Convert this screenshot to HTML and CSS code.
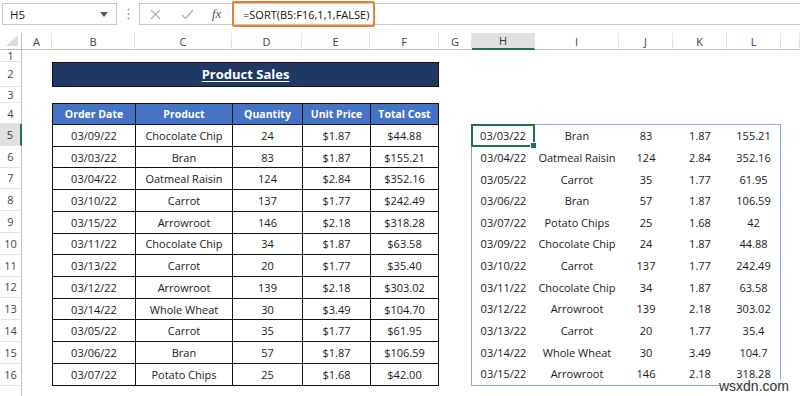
FILE: index.html
```html
<!DOCTYPE html>
<html>
<head>
	<title>SORT</title>
	<link rel="stylesheet" href="styles.css">
</head>
<body>

	<div class="formula-bar">
		<div class="name-box">
			<span>H5</span>
			<svg class="caret" width="8" height="5" viewBox="0 0 8 5"><path d="M0 0 H8 L4 5 Z" fill="#606060"/></svg>
		</div>
		<div class="grip">
			<svg width="3" height="12" viewBox="0 0 3 12"><circle cx="1.5" cy="1.5" r="1" fill="#9a9a9a"/><circle cx="1.5" cy="6" r="1" fill="#9a9a9a"/><circle cx="1.5" cy="10.5" r="1" fill="#9a9a9a"/></svg>
		</div>
		<div class="fx-area">
			<div class="fx-buttons">
				<svg width="11" height="11" viewBox="0 0 11 11"><path d="M1 1 L10 10 M10 1 L1 10" stroke="#b4b4b4" stroke-width="1.3"/></svg>
				<svg width="13" height="11" viewBox="0 0 13 11"><path d="M1 6 L4.5 9.5 L12 1" stroke="#b4b4b4" stroke-width="1.4" fill="none"/></svg>
				<span class="fx">fx</span>
			</div>
			<div class="formula">=SORT(B5:F16,1,1,FALSE)</div>
		</div>
	</div>

	<div class="sheet">
		<!-- column headers -->
		<div class="colhead corner">
			<svg width="12" height="11" viewBox="0 0 12 11"><path d="M12 0 V11 H0 Z" fill="#dcdcdc"/></svg>
		</div>
		<div class="colhead">A</div>
		<div class="colhead">B</div>
		<div class="colhead">C</div>
		<div class="colhead">D</div>
		<div class="colhead">E</div>
		<div class="colhead">F</div>
		<div class="colhead">G</div>
		<div class="colhead selected">H</div>
		<div class="colhead">I</div>
		<div class="colhead">J</div>
		<div class="colhead">K</div>
		<div class="colhead">L</div>
		<div class="colhead"></div>

		<!-- row headers -->
		<div class="rowhead first">1</div>
		<div class="rowhead">2</div>
		<div class="rowhead">3</div>
		<div class="rowhead">4</div>
		<div class="rowhead selected">5</div>
		<div class="rowhead">6</div>
		<div class="rowhead">7</div>
		<div class="rowhead">8</div>
		<div class="rowhead">9</div>
		<div class="rowhead">10</div>
		<div class="rowhead">11</div>
		<div class="rowhead">12</div>
		<div class="rowhead">13</div>
		<div class="rowhead">14</div>
		<div class="rowhead">15</div>
		<div class="rowhead">16</div>
		<div class="rowhead last"></div>

		<div class="banner"><span>Product Sales</span></div>

		<div class="sales">
			<div class="th">Order Date</div><div class="th">Product</div><div class="th">Quantity</div><div class="th">Unit Price</div><div class="th">Total Cost</div>
			<div>03/09/22</div><div>Chocolate Chip</div><div>24</div><div>$1.87</div><div>$44.88</div>
			<div>03/03/22</div><div>Bran</div><div>83</div><div>$1.87</div><div>$155.21</div>
			<div>03/04/22</div><div>Oatmeal Raisin</div><div>124</div><div>$2.84</div><div>$352.16</div>
			<div>03/10/22</div><div>Carrot</div><div>137</div><div>$1.77</div><div>$242.49</div>
			<div>03/15/22</div><div>Arrowroot</div><div>146</div><div>$2.18</div><div>$318.28</div>
			<div>03/11/22</div><div>Chocolate Chip</div><div>34</div><div>$1.87</div><div>$63.58</div>
			<div>03/13/22</div><div>Carrot</div><div>20</div><div>$1.77</div><div>$35.40</div>
			<div>03/12/22</div><div>Arrowroot</div><div>139</div><div>$2.18</div><div>$303.02</div>
			<div>03/14/22</div><div>Whole Wheat</div><div>30</div><div>$3.49</div><div>$104.70</div>
			<div>03/05/22</div><div>Carrot</div><div>35</div><div>$1.77</div><div>$61.95</div>
			<div>03/06/22</div><div>Bran</div><div>57</div><div>$1.87</div><div>$106.59</div>
			<div>03/07/22</div><div>Potato Chips</div><div>25</div><div>$1.68</div><div>$42.00</div>
		</div>

		<div class="sorted">
			<div class="active">03/03/22</div><div>Bran</div><div>83</div><div>1.87</div><div>155.21</div>
			<div>03/04/22</div><div>Oatmeal Raisin</div><div>124</div><div>2.84</div><div>352.16</div>
			<div>03/05/22</div><div>Carrot</div><div>35</div><div>1.77</div><div>61.95</div>
			<div>03/06/22</div><div>Bran</div><div>57</div><div>1.87</div><div>106.59</div>
			<div>03/07/22</div><div>Potato Chips</div><div>25</div><div>1.68</div><div>42</div>
			<div>03/09/22</div><div>Chocolate Chip</div><div>24</div><div>1.87</div><div>44.88</div>
			<div>03/10/22</div><div>Carrot</div><div>137</div><div>1.77</div><div>242.49</div>
			<div>03/11/22</div><div>Chocolate Chip</div><div>34</div><div>1.87</div><div>63.58</div>
			<div>03/12/22</div><div>Arrowroot</div><div>139</div><div>2.18</div><div>303.02</div>
			<div>03/13/22</div><div>Carrot</div><div>20</div><div>1.77</div><div>35.4</div>
			<div>03/14/22</div><div>Whole Wheat</div><div>30</div><div>3.49</div><div>104.7</div>
			<div>03/15/22</div><div>Arrowroot</div><div>146</div><div>2.18</div><div>318.28</div>
		</div>
	</div>

	<div class="watermark">wsxdn.com</div>

</body>
</html>
```

FILE: styles.css
```css
	*{
		box-sizing: border-box;
	}

	body{
		margin: 0;
		height: 396px;
		overflow: hidden;
		position: relative;
		background: #fff;
		font-family: "Open Sans", sans-serif;
		font-size: 11px;
		color: #1a1a1a;
	}

	/* formula bar */
	.formula-bar{
		display: flex;
		height: 22px;
		margin-top: 3px;
	}

	.name-box{
		width: 115px;
		margin-left: 2px;
		border: 1px solid #c6c6c6;
		display: flex;
		align-items: center;
		justify-content: space-between;
		padding: 0 8px 0 7px;
		color: #222;
		font-size: 11.5px;
	}

	.grip{
		width: 22px;
		display: flex;
		align-items: center;
		justify-content: center;
	}

	.fx-area{
		flex: 1;
		display: flex;
		align-items: center;
		border-top: 1px solid #c6c6c6;
		border-bottom: 1px solid #c6c6c6;
		border-left: 1px solid #c6c6c6;
	}

	.fx-buttons{
		width: 92px;
		display: flex;
		align-items: center;
		padding-left: 10px;
		gap: 20px;
	}

	.fx{
		font-family: "Liberation Serif", serif;
		font-style: italic;
		font-size: 13px;
		color: #555;
		margin-left: -2px;
	}

	.formula{
		height: 26px;
		display: flex;
		align-items: center;
		padding: 0 4px 0 9px;
		border: 2px solid #ed7d31;
		border-radius: 2px;
		font-size: 11px;
		color: #111;
	}

	/* sheet */
	.sheet{
		margin-top: 8px;
		height: 363px;
		display: grid;
		grid-template-columns: 22px 30px 83px 97px 70px 68px 69px 33px 63px 84px 54px 54px 54px 1fr;
		grid-template-rows: 17px 12px 24.5px 16.5px 21px repeat(12, 21.8px) 1fr;
	}

	.colhead{
		border-bottom: 1px solid #bdbdbd;
		border-right: 1px solid #e3e3e3;
		display: flex;
		align-items: center;
		justify-content: center;
		color: #444;
		font-size: 11px;
		line-height: 1;
	}

	.colhead.corner{
		justify-content: flex-end;
		align-items: flex-end;
		padding: 0 3px 3px 0;
		border-right-color: #bdbdbd;
	}

	.colhead.selected{
		background: #e1e1e1;
		border-bottom: 2px solid #217346;
		color: #333;
	}

	.rowhead{
		grid-column: 1;
		border-right: 1px solid #bdbdbd;
		border-bottom: 1px solid #e3e3e3;
		display: flex;
		align-items: center;
		justify-content: center;
		color: #444;
		font-size: 11px;
		line-height: 1;
	}

	.rowhead.first{
		font-size: 10.5px;
		line-height: 10px;
	}

	.rowhead.selected{
		background: #e1e1e1;
		border-right: 2px solid #217346;
		color: #333;
	}

	.rowhead.last{
		border-bottom: none;
	}

	.banner{
		grid-column: 3 / 8;
		grid-row: 3;
		background: #203864;
		border: 1px solid #111;
		display: flex;
		align-items: center;
		justify-content: center;
		color: #fff;
		font-weight: bold;
		font-size: 13px;
	}

	.banner span{
		text-decoration: underline;
		text-underline-offset: 2px;
	}

	.sales{
		grid-column: 3 / 8;
		grid-row: 5 / 18;
		display: grid;
		grid-template-columns: 83px 97px 70px 68px 68px;
		grid-template-rows: 21px repeat(12, 1fr);
		border-top: 1px solid #111;
		border-left: 1px solid #111;
	}

	.sales div{
		border-right: 1px solid #111;
		border-bottom: 1px solid #111;
		display: flex;
		align-items: center;
		justify-content: center;
		white-space: nowrap;
	}

	.sales .th{
		background: #4472c4;
		color: #fff;
		font-weight: bold;
		font-size: 10.5px;
	}

	.sorted{
		grid-column: 9 / 14;
		grid-row: 6 / 18;
		display: grid;
		grid-template-columns: 63px 84px 54px 54px 1fr;
		grid-template-rows: repeat(12, 1fr);
		border: 1px solid #8eaadb;
		margin-left: -1px;
	}

	.sorted div{
		display: flex;
		align-items: center;
		justify-content: center;
		white-space: nowrap;
	}

	.sorted .active{
		position: relative;
		border: 2px solid #217346;
		margin: -1px 0 0 -1px;
	}

	.sorted .active::after{
		content: "";
		position: absolute;
		right: -4px;
		bottom: -4px;
		width: 5px;
		height: 5px;
		background: #217346;
		border: 1px solid #fff;
	}

	.watermark{
		position: absolute;
		right: 11px;
		bottom: 3px;
		font-family: "Liberation Sans", sans-serif;
		font-size: 14px;
		line-height: 1;
		color: #333;
		background: rgba(255,255,255,.8);
	}
```
